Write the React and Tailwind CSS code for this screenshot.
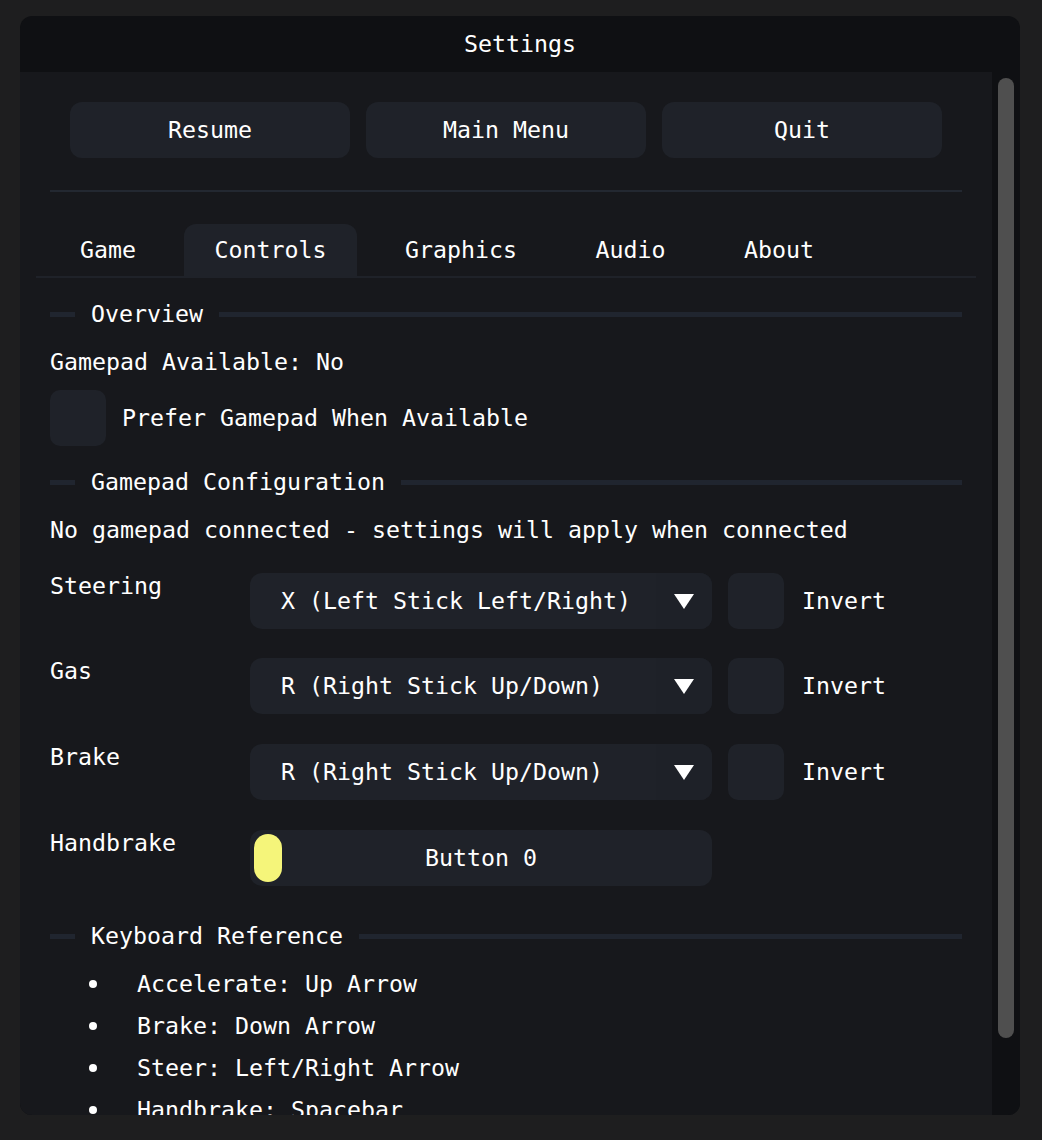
import React from 'react';

const mono = { fontFamily: '"DejaVu Sans Mono", "Liberation Mono", monospace' };

const SectionHeader = ({ title, className = '' }) => (
  <div className={`flex items-center h-[26px] ${className}`}>
    <div className="w-[25px] h-[5px] bg-[#20252f]" />
    <span className="px-[16px] whitespace-pre">{title}</span>
    <div className="flex-1 h-[5px] bg-[#20252f]" />
  </div>
);

const Checkbox = () => <div className="w-[56px] h-[56px] rounded-[10px] bg-[#1f2229] shrink-0" />;

const Combo = ({ value }) => (
  <div className="w-[462px] h-[56px] rounded-[12px] bg-[#1f2229] flex items-center overflow-hidden">
    <span className="flex-1 pl-[31px] whitespace-pre">{value}</span>
    <div className="w-[56px] h-full bg-[#1e2128] flex items-center justify-center">
      <svg width="20" height="15" viewBox="0 0 20 15">
        <polygon points="0,0 20,0 10,15" fill="#ffffff" />
      </svg>
    </div>
  </div>
);

const AxisRow = ({ label, value, className = '' }) => (
  <div className={`flex items-start ${className}`}>
    <div className="w-[200px] h-[26px] leading-[26px]">{label}</div>
    <Combo value={value} />
    <div className="ml-[16px]">
      <Checkbox />
    </div>
    <div className="ml-[18px] h-[56px] flex items-center">Invert</div>
  </div>
);

const tabs = ['Game', 'Controls', 'Graphics', 'Audio', 'About'];

const keys = [
  'Accelerate: Up Arrow',
  'Brake: Down Arrow',
  'Steer: Left/Right Arrow',
  'Handbrake: Spacebar',
];

export default function App() {
  return (
    <div
      className="w-[1042px] h-[1140px] bg-[#1e1e1f] pt-[16px] px-[20px] overflow-hidden text-white text-[23.26px] leading-[26px]"
      style={mono}
    >
      <div className="w-[1000px] h-[1099px] rounded-[12px] overflow-hidden flex flex-col bg-[#0f1013]">
        {/* title bar */}
        <div className="h-[56px] flex items-center justify-center shrink-0">Settings</div>

        <div className="flex flex-1 min-h-0">
          {/* content */}
          <div className="w-[972px] bg-[#17181c] px-[30px] overflow-hidden">
            <div className="mt-[30px] flex justify-center gap-[16px]">
              {['Resume', 'Main Menu', 'Quit'].map((b) => (
                <div
                  key={b}
                  className="w-[280px] h-[56px] rounded-[12px] bg-[#1f2229] flex items-center justify-center whitespace-pre"
                >
                  {b}
                </div>
              ))}
            </div>

            <div className="mt-[32px] h-[2px] bg-[#232831]" />

            {/* tabs */}
            <div className="mt-[32px] -mx-[14px] border-b-2 border-[#1f2229] flex items-end gap-[16.5px] pl-[13px] h-[54px]">
              {tabs.map((t) => (
                <div
                  key={t}
                  className={`h-[52px] px-[31px] flex items-center rounded-t-[12px] ${
                    t === 'Controls' ? 'bg-[#1f2229]' : ''
                  }`}
                >
                  {t}
                </div>
              ))}
            </div>

            <SectionHeader title="Overview" className="mt-[23px]" />
            <div className="mt-[22px] h-[26px] whitespace-pre">Gamepad Available: No</div>
            <div className="mt-[15px] flex items-center">
              <Checkbox />
              <span className="ml-[16px] whitespace-pre">Prefer Gamepad When Available</span>
            </div>

            <SectionHeader title="Gamepad Configuration" className="mt-[23px]" />
            <div className="mt-[22px] h-[26px] whitespace-pre">
              No gamepad connected - settings will apply when connected
            </div>

            <AxisRow label="Steering" value="X (Left Stick Left/Right)" className="mt-[30px]" />
            <AxisRow label="Gas" value="R (Right Stick Up/Down)" className="mt-[29px]" />
            <AxisRow label="Brake" value="R (Right Stick Up/Down)" className="mt-[30px]" />

            <div className="mt-[30px] flex items-start">
              <div className="w-[200px] h-[26px] leading-[26px]">Handbrake</div>
              <div className="w-[462px] h-[56px] rounded-[12px] bg-[#1f2229] flex items-center px-[4px]">
                <div className="w-[28px] h-[48px] rounded-full bg-[#f5f57a] shrink-0" />
                <span className="flex-1 text-center pr-[28px] whitespace-pre">Button 0</span>
              </div>
            </div>

            <SectionHeader title="Keyboard Reference" className="mt-[37px]" />
            <div className="mt-[22px] flex flex-col gap-[16px]">
              {keys.map((k) => (
                <div key={k} className="flex items-center h-[26px]">
                  <div className="w-[86px] flex justify-center">
                    <div className="w-[8px] h-[8px] rounded-full bg-white" />
                  </div>
                  <span className="ml-[1px] whitespace-pre">{k}</span>
                </div>
              ))}
            </div>
          </div>

          {/* scrollbar */}
          <div className="w-[28px] bg-[#0f1013] pt-[6px] px-[6px]">
            <div className="w-[16px] h-[960px] rounded-full bg-[#4f4f4f]" />
          </div>
        </div>
      </div>
    </div>
  );
}
